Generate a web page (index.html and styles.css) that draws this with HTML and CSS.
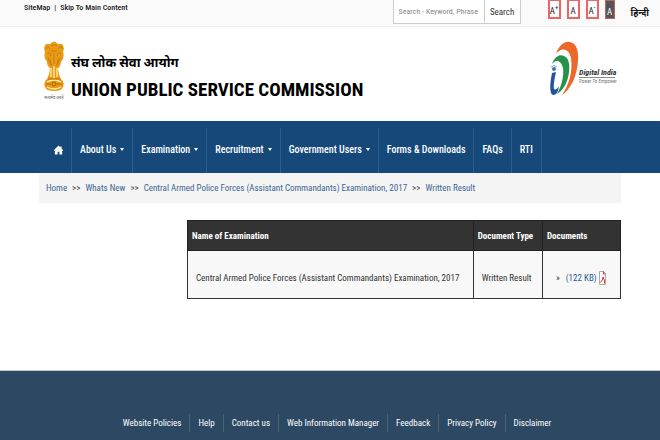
FILE: index.html
```html
<!DOCTYPE html>
<html lang="en">
<head>
<meta charset="utf-8">
<title>Union Public Service Commission</title>
<link rel="stylesheet" href="styles.css">
</head>
<body>
<div class="topbar">
  <div class="skip"><a href="#">SiteMap</a><span>|</span><a href="#main">Skip To Main Content</a></div>
  <form class="search">
    <input type="text" aria-label="Search" placeholder="Search - Keyword, Phrase">
    <button type="button">Search</button>
  </form>
  <div class="sizes">
    <button type="button">A<sup>+</sup></button>
    <button type="button">A</button>
    <button type="button">A<sup>-</sup></button>
    <button type="button" class="contrast">A</button>
  </div>
  <a class="hindi" href="#" lang="hi">हिन्दी</a>
</div>
<header class="header">
  <svg class="emblem" viewBox="0 0 22 60" aria-hidden="true">
    <path d="M7 3Q11-2 15 3L19 3Q22 6 20 11Q22 16 18 21Q17 27 15 27Q16 35 18 38Q22 41 20 46Q19 50 11 50Q3 50 2 46Q0 41 4 38Q6 35 7 27Q4 25 4 21Q0 16 2 11Q0 6 3 3Z" fill="#e99b16"/>
    <path d="M3 8Q5 4 7 8M8 5Q11 2 14 5M15 8Q18 4 20 8M4 13Q7 10 8 15M14 15Q15 10 18 13M8 9Q11 12 14 9M7 18L8 24M11 13V23M15 18L14 24M5 16Q6 22 9 25M17 16Q16 22 13 25" fill="none" stroke="#c0740f" stroke-width=".8"/>
    <path d="M8 27V36M11 25V37M14 27V36M4 41Q11 37 18 41M4 46Q11 50 18 46" fill="none" stroke="#fff0a8" stroke-width="1.3"/>
    <circle cx="11" cy="43" r="2" fill="none" stroke="#a85c08"/>
    <path d="M3 43H8M14 43H19M5 38H17" stroke="#bd6b08"/>
    <text x="11" y="58" text-anchor="middle" class="motto" lang="hi">सत्यमेव जयते</text>
  </svg>
  <div class="names">
    <p class="name-hi" lang="hi">संघ लोक सेवा आयोग</p>
    <h1>UNION PUBLIC SERVICE COMMISSION</h1>
  </div>
  <svg class="digital" viewBox="0 0 68 56" role="img" aria-label="Digital India, Power To Empower">
    <path d="M7 13C10 4 16 0 21 1C27 2 30 9 29 20C28 35 22 48 13 54C20 44 24 30 22 17C20 7 12 6 7 13Z" fill="#ed682b"/>
    <path d="M3 23C6 15 11 13 15 15C20 17 21 24 20 31C19 41 14 50 8 53C13 44 15 34 14 27C12 19 7 18 3 23Z" fill="#27934a"/>
    <path d="M3 32L7 31Q4 44 5 48Q7 50 10 45Q9 54 4 54Q-1 52 3 32Z" fill="#2451a3"/>
    <circle cx="5" cy="28" r="2" fill="#3d75b8"/>
    <path d="M2 26Q5 23 8 26" fill="none" stroke="#79a7d1"/>
    <path d="M30 36.500H66" stroke="#8a8a8a" stroke-width="1"/>
    <text x="30" y="34" class="di-name">Digital India</text>
    <text x="30" y="42" class="di-line">Power To Empower</text>
  </svg>
</header>
<nav class="nav">
  <a href="#" aria-label="Home"><svg class="home" viewBox="0 0 10 10" aria-hidden="true"><path d="M5 0L7 2V1H8.500V3.500L10 5V6H9V10H6V7H4V10H1V6H0V5Z" fill="#fff"/></svg></a>
  <a href="#">About Us<i class="caret"></i></a>
  <a href="#">Examination<i class="caret"></i></a>
  <a href="#">Recruitment<i class="caret"></i></a>
  <a href="#">Government Users<i class="caret"></i></a>
  <a href="#">Forms &amp; Downloads</a>
  <a href="#">FAQs</a>
  <a href="#">RTI</a>
</nav>
<main id="main" class="main">
  <div class="crumbs"><a href="#">Home</a><span>&gt;&gt;</span><a href="#">Whats New</a><span>&gt;&gt;</span><a href="#">Central Armed Police Forces (Assistant Commandants) Examination, 2017</a><span>&gt;&gt;</span><a href="#">Written Result</a></div>
  <table class="results">
    <thead><tr><th class="col-name">Name of Examination</th><th class="col-type">Document Type</th><th>Documents</th></tr></thead>
    <tbody><tr>
      <td>Central Armed Police Forces (Assistant Commandants) Examination, 2017</td>
      <td>Written Result</td>
      <td><div class="doc"><span>»</span><a href="#">(122 KB)<svg class="pdf" viewBox="0 0 7 14" aria-hidden="true"><path d="M.5.5H4.500L6.500 3V13.500H.5Z" fill="#fff" stroke="#b5a5a5"/><path d="M4.500.5V3H6.500M1.500 11.500Q4 9 4 6Q6 9 5.500 12.500" fill="none" stroke="#e3262e"/></svg></a></div></td>
    </tr></tbody>
  </table>
</main>
<footer class="footer">
  <a href="#">Website Policies</a><a href="#">Help</a><a href="#">Contact us</a><a href="#">Web Information Manager</a><a href="#">Feedback</a><a href="#">Privacy Policy</a><a href="#">Disclaimer</a>
</footer>
</body>
</html>
```
FILE: styles.css
```css
* { box-sizing: border-box; }
body {
  margin: 0;
  min-height: 100vh;
  display: flex;
  flex-direction: column;
  background: #fff;
  color: #333;
  font: 10px/16px "Roboto Condensed", "Liberation Sans", "Noto Sans", sans-serif;
}
a { color: inherit; text-decoration: none; }
button, input { font: inherit; color: inherit; margin: 0; }
h1, p { margin: 0; }

.topbar {
  display: flex;
  align-items: flex-start;
  height: 27px;
  padding: 0 11px 0 24px;
  background: #fafafa;
  border-bottom: 1px solid #eee;
}
.skip { display: flex; gap: 4px; margin-right: auto; color: #222; font-size: 8px; font-weight: 500; }
.search {
  display: flex;
  width: 128px;
  height: 24px;
  background: #fff;
  border: 1px solid #ccc;
  border-top: 0;
}
.search input {
  flex: 1;
  min-width: 0;
  padding: 0 5px;
  border: 0;
  background: none;
  font-size: 8px;
}
.search input::placeholder { color: #888; opacity: 1; }
.search button { width: 36px; padding: 0; border: 0; border-left: 1px solid #ccc; background: none; font-size: 9px; }
.sizes { display: flex; gap: 6px; margin-left: 27px; }
.sizes button {
  width: 13px;
  height: 19px;
  padding: 4px 0 0;
  border: 2px solid #ec6468;
  border-top-width: 1px;
  background: #fff;
  color: #222;
  font-size: 9px;
  line-height: 12px;
  white-space: nowrap;
}
.sizes sup { font-size: 7px; line-height: 0; }
.sizes .contrast { width: 10px; border: 1px solid #b66; background: #555; color: #fff; }
.hindi { margin-left: 16px; padding-top: 5px; color: #111; font-size: 9px; font-weight: bold; }

.header { display: flex; align-items: flex-start; height: 94px; padding: 14px 43px 0; }
.emblem { width: 22px; height: 60px; }
.motto { font-size: 4px; fill: #555; }
.names { margin: 8px auto 0 6px; color: #000; }
.name-hi { font-size: 13px; line-height: 28px; font-weight: bold; }
h1 { font-size: 19px; line-height: 26px; white-space: nowrap; }
.digital { width: 68px; height: 56px; }
.di-name { font: italic bold 8px "Roboto Condensed", sans-serif; fill: #333; }
.di-line { font-size: 5px; fill: #777; }

.nav {
  display: flex;
  height: 52px;
  padding: 7px 46px 0;
  background: #16497a;
  color: #fff;
  font-size: 10px;
  font-weight: 500;
}
.nav a {
  display: flex;
  align-items: center;
  gap: 4px;
  padding: 0 8px 2px;
  border-right: 1px solid #2c5f8e;
  white-space: nowrap;
}
.home { width: 9px; height: 10px; }
.caret { border: 2px solid transparent; border-top: 3px solid #fff; border-bottom: 0; }

.main { flex: 1; padding: 0 39px; font-size: 9px; }
.crumbs { display: flex; gap: 5px; padding: 7px; background: #f4f4f4; color: #444; white-space: nowrap; }
.crumbs a { color: #3b6492; }
.results {
  width: calc(100% - 148px);
  margin: 17px 0 0 auto;
  border-collapse: collapse;
  white-space: nowrap;
}
.col-name { width: 66%; }
.col-type { width: 16%; }
.results th, .results td { border: 1px solid #333; text-align: left; }
.results th { height: 30px; padding: 0 4px; background: #333; color: #fff; border-color: #222; }
.results td { height: 48px; padding: 6px 8px 0; background: #f8f8f8; }
.doc { display: flex; align-items: center; gap: 6px; padding: 0 5px; }
.doc a { display: flex; align-items: center; gap: 2px; color: #285a8e; }
.pdf { width: 7px; height: 14px; }

.footer {
  display: flex;
  justify-content: center;
  height: 70px;
  padding: 43px 0 0 14px;
  background: #2c4863;
  border-top: 1px solid #b8c9d3;
  color: #fff;
  font-size: 9px;
}
.footer a { height: 18px; padding: 0 8px; line-height: 18px; border-right: 1px solid #48637c; }
.footer a:last-child { border: 0; }
```
